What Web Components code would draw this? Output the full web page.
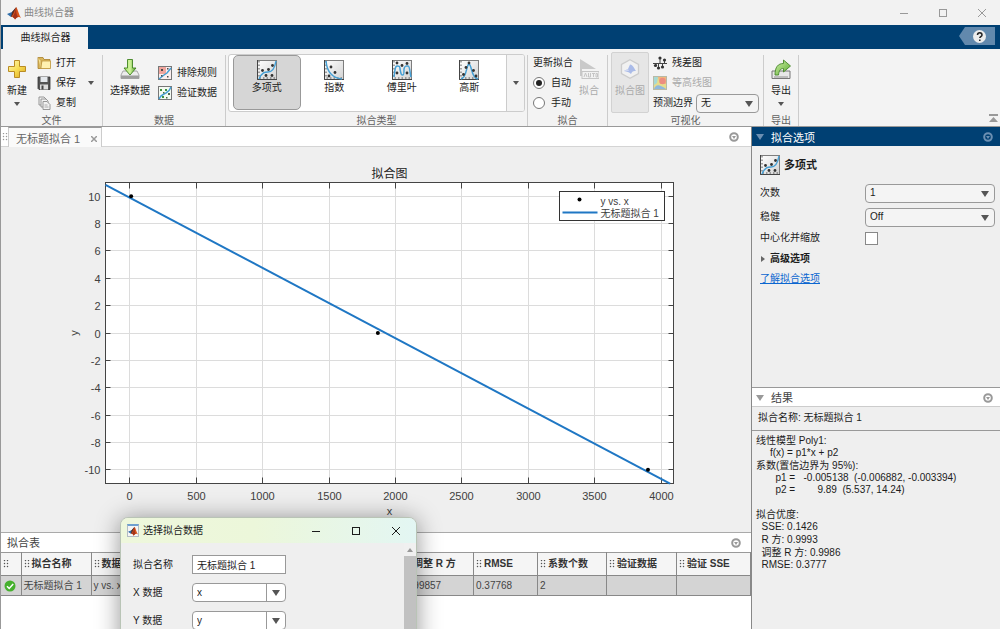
<!DOCTYPE html>
<html lang="zh-CN">
<head>
<meta charset="utf-8">
<title>曲线拟合器</title>
<style>
html,body{margin:0;height:100%;overflow:hidden;background:#efefef}
body{font:10px/14px "Liberation Sans","Noto Sans CJK SC",sans-serif;color:#1c1c1c}
</style>
</head>
<body>
<fit-app></fit-app>
<script>
const RESET = `*{box-sizing:border-box}
button,input,select{font:inherit;color:inherit;margin:0}
button{border:0;background:none;padding:0;display:block}
svg{display:block}`;
function define(name, css, html, init) {
  const t = document.createElement('template');
  t.innerHTML = `<style>${RESET}${css}</style>${html}`;
  customElements.define(name, class extends HTMLElement {
    constructor() {
      super();
      this.attachShadow({mode: 'open'}).append(t.content.cloneNode(true));
    }
    connectedCallback() { if (init) init(this, this.shadowRoot); }
  });
}

/* ---------- icons ---------- */
const frame = `<defs><linearGradient id="f" x2="1" y2="1"><stop offset="0" stop-color="#fff"/><stop offset="1" stop-color="#d2d2d2"/></linearGradient></defs>
<rect x=".5" y=".5" width="19" height="19" fill="url(#f)" stroke="#7d7d7d"/><path d="M2 1v17h17" fill="none" stroke="#555" stroke-width="1" stroke-dasharray="1.5 2"/><path d="M.5 0v19.500H20" fill="none" stroke="#444"/>`;
const dots = a => a.map(p => `<circle cx="${p[0]}" cy="${p[1]}" r="1.4" fill="#333"/>`).join('');
const curve = d => `<path d="${d}" fill="none" stroke="#46a0d5" stroke-width="1.5"/>`;
const ICONS = {
  poly: [20, frame + curve('M2 19C5 12 8 12 11 12C16 12 18 7 19 1') + dots([[5.5,10.5],[11.5,9.5],[15.5,5.5],[9,15.5],[15,15.5]])],
  exp: [20, frame + curve('M2 1C3 12 8 18 18 19') + dots([[7,7],[11,12.5],[5,16]])],
  fourier: [20, frame + curve('M2 17C3 10 3 6 5 6C7 6 8 6 8 9C9 14 9 15 11 15C12 15 12 12 12 9C13 5 14 6 16 6C18 6 18 14 19 17') + dots([[5,3],[10,5.5],[15,3.5],[5,13],[15,13]])],
  gauss: [20, frame + curve('M2 19C8 18 7 5 10 4C13 5 12 18 19 19') + dots([[10,3],[7,7.5],[14.5,10.5],[4.5,14.5],[17,16]])],
  matlab: [14, `<path d="M0 8L5 6L9 1.5L7 9L4 11z" fill="#2f6da8"/><path d="M5 6L9.300 1L7 10L4 11z" fill="#5c2c24"/><path d="M9.300 1C11 4 12 9 14 12C12 10.500 10.500 10.500 8 13.500C7.500 12 6 11 4.500 10.500C7 8 7.500 3.500 9.300 1z" fill="#d95319"/><path d="M9.300 1.500C9 6 9.500 9 11 11C9.500 11 9 12.500 8 13.500C7.500 12 6.500 11.500 5.500 11C8 8 8.200 4 9.300 1.500z" fill="#a2321b"/>`],
  plus: [20, `<defs><linearGradient id="p" x2="1" y2="1"><stop offset="0" stop-color="#fff9c0"/><stop offset=".5" stop-color="#f8de54"/><stop offset="1" stop-color="#dba51e"/></linearGradient></defs><path d="M7.500 1.500h5v6h6v5h-6v6h-5v-6h-6v-5h6z" fill="url(#p)" stroke="#b98c25" stroke-linejoin="round"/>`],
  open: [14, `<path d="M1 1.500h5l1 2h6v9H1z" fill="#d9b65c" stroke="#a9822c" stroke-width=".8"/><path d="M3.500 12.500L5 5h8.500v7.500z" fill="#fff2b0" stroke="#c09a42" stroke-width=".8"/><path d="M1 1.500l3 3v8" fill="#f6e294" stroke="#b18a33" stroke-width=".6"/>`],
  save: [14, `<path d="M1 1h12v12.500H2l-1-1z" fill="#555" stroke="#333" stroke-width=".8"/><rect x="3.500" y="1" width="7" height="5" fill="#e4e8ec"/><rect x="3" y="8.500" width="8" height="5" fill="#ddd"/><rect x="4.500" y="9.500" width="2" height="4" fill="#444"/>`],
  copy: [14, `<g fill="#f2f2f2" stroke="#8d8d8d" stroke-width=".9"><path d="M2 1h5l2 2v6H2z"/><path d="M4 3h5l2 2v6H4z"/><path d="M6 5.500h4l3 3v5H6z"/></g><path d="M7.500 9h3M7.500 11h4" stroke="#999" stroke-width=".8"/>`],
  import: [20, `<defs><linearGradient id="g"><stop offset="0" stop-color="#a7df64"/><stop offset=".5" stop-color="#d0f49c"/><stop offset="1" stop-color="#4f9e24"/></linearGradient></defs><path d="M3 12h14l2 4v3.500H1V16z" fill="#ececec" stroke="#969696" stroke-width=".8"/><path d="M1 16.500h18v3H1z" fill="#9d9d9d"/><path d="M7.500 .5h5v8.500h3.500l-6 7-6-7h3.500z" fill="url(#g)" stroke="#3f8220" stroke-width=".9"/>`],
  export: [20, `<defs><linearGradient id="x" x2="1" y2="1"><stop offset="0" stop-color="#d4f2ac"/><stop offset="1" stop-color="#56aa2b"/></linearGradient></defs><path d="M1 12h18v7.500H1z" fill="#e8e8e8" stroke="#777" stroke-width="1"/><path d="M3 17h14v2H3z" fill="#bdbdbd"/><path d="M4 16C4 8 7 4.500 12.500 4.500V1L19.500 7l-7 6V9.500C9 9.500 8 12 7.500 16z" fill="url(#x)" stroke="#47862a" stroke-width=".9"/>`],
  exclude: [14, `<rect x=".5" y=".5" width="13" height="13" fill="#fbeeee" stroke="#777"/><path d="M1 1h7v7H1z" fill="#f0a59d"/><path d="M1 13L6 9L9 7L13 2" fill="none" stroke="#46a0d5" stroke-width="1.500"/><path d="M3 3h2v2H3zM9 2h1.500v1.500H9zM3 9h1.500v1.500H3zM9 10h1.500v1.500H9z" fill="#4b4b4b"/>`],
  validate: [14, `<rect x=".5" y=".5" width="13" height="13" fill="#f4faf2" stroke="#777"/><path d="M1 13C3 8 5 9 8 7C10 6 12 4 13 1" fill="none" stroke="#46a0d5" stroke-width="1.500"/><path d="M2 3h2v2H2zM7 3h2v2H7zM4 10h2v2H4z" fill="#3f9140"/><path d="M10 7h2v2h-2zM8 11h1.500v1.500H8zM5 6h1.500v1.500H5z" fill="#4b6a4b"/>`],
  auto: [20, `<path d="M1 0L17 10H3v7H1z" fill="#c9c9c9"/><rect x="3" y="12.500" width="17" height="7" fill="#f1f1f1" stroke="#c5c5c5"/><path d="M5 18l1.500-4L8 18M9.500 14v4h2v-4M13 14.500h3M14.500 14v4M17 14.500h1.500V18H17z" fill="none" stroke="#c5c5c5"/>`],
  fitplot: [20, `<path d="M10 .800L18.500 5.500v9L10 19.200L1.500 14.500v-9z" fill="#f1f1f1" stroke="#ccc" stroke-width="1.300"/><path d="M4 12L8 10L10 5.500C13 6 14 9 16 12C13 11.500 12 12.500 11 15C9 13 7 12.500 4 12z" fill="#aabbe8"/><path d="M4 12L8 10L9 12z" fill="#cfd7f1"/>`],
  resid: [14, `<path d="M0 7.500h14M3 7v3M7 3v4M5.500 7v5M9.500 7v4M11.500 4v3" stroke="#444"/><g fill="#333"><circle cx="7" cy="2" r="1.600"/><circle cx="11.500" cy="4" r="1.600"/><circle cx="2.500" cy="9.500" r="1.600"/><circle cx="5.500" cy="12" r="1.600"/><circle cx="9.500" cy="11" r="1.600"/></g>`],
  contour: [14, `<rect x=".5" y=".5" width="13" height="13" fill="#e6dc8c" stroke="#b9b9a5"/><path d="M1 1h4L4 7L1 9z" fill="#a5d9d4"/><path d="M5 1h8v7H7z" fill="#f4b77a"/><circle cx="9.500" cy="5" r="3.200" fill="#ec8d80"/><path d="M1 13C3 8 6 8 13 13z" fill="#8fb8dc"/>`],
  check: [12, `<circle cx="6" cy="6" r="5.500" fill="#46b02e"/><path d="M3 6.200l2.200 2.300L9.200 4" fill="none" stroke="#fff" stroke-width="1.500"/>`],
  down: [8, `<path d="M1 2h6L4 6z" fill="#555"/>`],
  tri: [8, `<path d="M0 1h8L4 7z" fill="currentColor"/>`],
  right: [8, `<path d="M2 1v6l4-3z" fill="#666"/>`],
  menu: [12, `<circle cx="6" cy="6" r="3.800" fill="none" stroke="currentColor" stroke-width="2"/><path d="M4 5h4L6 8z" fill="currentColor"/>`],
  grip: [8, `<path d="M1 0h1v1H1zM4 0h1v1H4zM1 3h1v1H1zM4 3h1v1H4zM1 6h1v1H1zM4 6h1v1H4z" fill="currentColor" stroke="currentColor" stroke-width=".3"/>`],
  min: [10, `<path d="M1 5.500h8" stroke="currentColor" fill="none"/>`],
  max: [10, `<rect x="1.500" y="1.500" width="7" height="7" stroke="currentColor" fill="none"/>`],
  close: [10, `<path d="M1 1l8 8M9 1l-8 8" stroke="currentColor" fill="none"/>`]
};
define('ui-icon', `:host{display:block;flex:none}`, `<div></div>`, (el, root) => {
  const [n, body] = ICONS[el.getAttribute('name')];
  const s = el.getAttribute('size') || n;
  root.querySelector('div').innerHTML = `<svg width="${s}" height="${s}" viewBox="0 0 ${n} ${n}" aria-hidden="true">${body}</svg>`;
});

/* ---------- controls ---------- */
define('big-button', `:host{display:block}
button{display:flex;flex-direction:column;align-items:center;width:100%;white-space:nowrap}
ui-icon{margin-bottom:5px}.arrow{margin-top:2px}
:host([disabled]) button{color:#aaa}`,
`<button type="button"></button>`, (el, root) => {
  const b = root.querySelector('button');
  b.innerHTML = `<ui-icon name="${el.getAttribute('icon')}"></ui-icon><slot></slot>` + (el.hasAttribute('menu') ? '<ui-icon class="arrow" name="down"></ui-icon>' : '');
  b.disabled = el.hasAttribute('disabled');
});
define('row-button', `:host{display:block}
button{display:flex;align-items:center;gap:5px;height:20px;width:100%;white-space:nowrap}
:host([disabled]) button{color:#aaa}ui-icon:nth-of-type(2){margin-left:auto}`,
`<button type="button"></button>`, (el, root) => {
  const b = root.querySelector('button');
  b.innerHTML = `<ui-icon name="${el.getAttribute('icon')}"></ui-icon><slot></slot>` + (el.hasAttribute('menu') ? '<ui-icon name="down"></ui-icon>' : '');
  b.disabled = el.hasAttribute('disabled');
});
define('tool-section', `:host{display:flex;flex-direction:column;flex:none;border-right:1px solid #ccc;height:71px}
.c{height:58px;display:flex}.l{height:13px;line-height:15px;text-align:center;color:#606060}`,
`<div class="c"><slot></slot></div><div class="l"></div>`, (el, root) => { root.querySelector('.l').textContent = el.getAttribute('label'); });
define('drop-down', `:host{display:block;position:relative;height:19px}
select{appearance:none;width:100%;height:100%;border:1px solid #999;border-radius:4px;background:#f4f4f4;padding:0 20px 0 4px;display:block;outline:0}
ui-icon{position:absolute;right:6px;top:6px;color:#555;pointer-events:none}
:host([split]) select{background:#fff}
:host([split]) i{position:absolute;right:19px;top:0;bottom:0;width:1px;background:#999}`,
`<select><option></option></select><i></i><ui-icon name="tri"></ui-icon>`, (el, root) => {
  root.querySelector('option').textContent = el.getAttribute('value');
  root.querySelector('select').setAttribute('aria-label', el.getAttribute('label'));
});

/* ---------- title bar and ribbon ---------- */
define('title-bar', `:host{display:flex;align-items:center;height:25px;background:#f2f2f2;color:#888;padding:0 13px 0 6px;gap:3px}
.b{display:flex;gap:29px;margin-left:auto;color:#999}`,
`<ui-icon name="matlab"></ui-icon><span>曲线拟合器</span><div class="b"><button aria-label="最小化"><ui-icon name="min"></ui-icon></button><button aria-label="最大化"><ui-icon name="max"></ui-icon></button><button aria-label="关闭"><ui-icon name="close"></ui-icon></button></div>`);
define('ribbon-tabs', `:host{display:flex;justify-content:space-between;height:24px;background:#004073;padding:2px 5px 0 2px}
.t{background:#f3f3f3;width:85px;text-align:center;height:22px;line-height:20px}
.h{width:36px;height:18px}`,
`<button class="t">曲线拟合器</button><button class="h" aria-label="帮助"><svg width="36" height="18"><path d="M0 9L6 0h30v18H6z" fill="#6289ad"/><circle cx="20.500" cy="9.500" r="6.500" fill="#ececec"/><path d="M18.500 8c0-3 4.500-3 4.500 0c0 1.500-2.200 1.800-2.200 3M20.800 12.500v1.500" fill="none" stroke="#222" stroke-width="1.500"/></svg></button>`);
define('fit-gallery', `:host{display:flex;height:58px;border:1px solid #ccc;border-radius:3px;background:#fff;overflow:hidden}
.g{flex:1;display:grid;grid-template-columns:repeat(4,1fr);padding:0 3px 0 4px}
.g button{display:flex;flex-direction:column;align-items:center;gap:1px;height:55px;padding-top:4px;border:1px solid transparent;border-radius:5px;line-height:14px}
.g .on{background:#d6d6d6;border-color:#999}
.m{width:18px;background:#f3f3f3;border-left:1px solid #ccc;padding-left:5px}`,
`<div class="g"><button class="on"><ui-icon name="poly"></ui-icon>多项式</button><button><ui-icon name="exp"></ui-icon>指数</button><button><ui-icon name="fourier"></ui-icon>傅里叶</button><button><ui-icon name="gauss"></ui-icon>高斯</button></div><button class="m" aria-label="更多"><ui-icon name="down"></ui-icon></button>`);
define('tool-strip', `:host{display:flex;height:78px;background:#f3f3f3;border-bottom:1px solid #999;padding:6px 0 0 0}
.file{width:102px}.data{width:123px}.type{width:302px}.fit{width:80px}.vis{width:156px}.exp{width:35px}
.rows{margin-top:-2px}
big-button{padding-top:4px}
.file big-button{width:32px}.file .rows{margin-left:4px;width:58px}
.data big-button{width:54px}.data .rows{margin:8px 0 0 1px}
fit-gallery{flex:1;margin:-1px 2px 0 2px}
.fit .rows{padding-left:5px;width:48px}.fit label{display:flex;align-items:center;height:20px;gap:6px}.fit .cap{height:20px;line-height:20px;white-space:nowrap}
input[type=radio]{appearance:none;width:12px;height:12px;border:1px solid #777;border-radius:50%;background:#fff;display:grid;place-content:center}
input:checked::before{content:"";width:6px;height:6px;border-radius:50%;background:#222}
.fit big-button{width:26px}
.vis big-button{width:38px;height:61px;margin:-3px 4px 0 3px;background:#e6e6e6;border:1px solid #d2d2d2;border-radius:2px;padding-top:6px}
.bound{display:flex;align-items:center;gap:3px;height:20px}.bound drop-down{width:63px}
.exp big-button{width:35px}
.up{margin:auto 2px 3px auto}`,
`<tool-section class="file" label="文件"><big-button icon="plus" menu>新建</big-button><div class="rows"><row-button icon="open">打开</row-button><row-button icon="save" menu>保存</row-button><row-button icon="copy">复制</row-button></div></tool-section>
<tool-section class="data" label="数据"><big-button icon="import">选择数据</big-button><div class="rows"><row-button icon="exclude">排除规则</row-button><row-button icon="validate">验证数据</row-button></div></tool-section>
<tool-section class="type" label="拟合类型"><fit-gallery></fit-gallery></tool-section>
<tool-section class="fit" label="拟合"><div class="rows"><div class="cap">更新拟合</div><label><input type="radio" name="u" checked>自动</label><label><input type="radio" name="u">手动</label></div><big-button icon="auto" disabled>拟合</big-button></tool-section>
<tool-section class="vis" label="可视化"><big-button icon="fitplot" disabled>拟合图</big-button><div class="rows"><row-button icon="resid">残差图</row-button><row-button icon="contour" disabled>等高线图</row-button><div class="bound"><span>预测边界</span><drop-down value="无" label="预测边界"></drop-down></div></div></tool-section>
<tool-section class="exp" label="导出"><big-button icon="export" menu>导出</big-button></tool-section>
<button class="up" aria-label="折叠"><svg width="9" height="9"><path d="M0 0h9v2H0zM4.500 3L9 8H0z" fill="#999"/></svg></button>`);

/* ---------- chart ---------- */
define('fit-chart', `:host{display:block;flex:1;min-height:0;position:relative;overflow:hidden}
svg{position:absolute;inset:0;width:100%;height:100%}
text{font-size:11px;fill:#404040}`,
`<svg role="img" aria-label="拟合图"></svg>`, (el, root) => {
  const svg = root.querySelector('svg');
  const draw = () => {
    const W = el.clientWidth, H = el.clientHeight;
    const L = 104.5, R = W - 77.5, T = 35.5, B = H - 48.5;
    const x = v => L + (v + 183) * (R - L) / 4275;
    const y = v => T + (11 - v) * (B - T) / 22;
    let s = `<rect x="${L}" y="${T}" width="${R-L}" height="${B-T}" fill="#fff"/>`, grid = '', tick = '', txt = '';
    for (let v = 0; v <= 4000; v += 500) {
      const p = Math.floor(x(v)) + .5;
      grid += `M${p} ${T}V${B}`; tick += `M${p} ${T}v6M${p} ${B}v-6`;
      txt += `<text x="${p}" y="${B+16}" text-anchor="middle">${v}</text>`;
    }
    for (let v = -10; v <= 10; v += 2) {
      const p = Math.floor(y(v)) + .5;
      grid += `M${L} ${p}H${R}`; tick += `M${L} ${p}h5M${R} ${p}h-5`;
      txt += `<text x="${L-5}" y="${p+4}" text-anchor="end">${v}</text>`;
    }
    const m = (L + R) / 2, f = v => 9.89 - .005138 * v;
    const pts = [[10,10],[1867,0],[3900,-10]].map(p => `<circle cx="${x(p[0])}" cy="${y(p[1])}" r="2"/>`).join('');
    const gx = R - 114, gy = T + 9;
    s += `<path d="${grid}" stroke="#dcdcdc"/><path d="${tick}" stroke="#444"/><rect x="${L}" y="${T}" width="${R-L}" height="${B-T}" fill="none" stroke="#444"/>
<path d="M${x(-183)} ${y(f(-183))}L${x(4066)} ${y(f(4066))}" stroke="#1f77c4" stroke-width="2"/>${pts}${txt}
<text x="${m}" y="${T-5}" text-anchor="middle" style="font-size:12px;fill:#222">拟合图</text>
<text x="${m}" y="${B+31}" text-anchor="middle">x</text>
<text transform="translate(${L-28} ${(T+B)/2}) rotate(-90)" text-anchor="middle">y</text>
<rect x="${gx}" y="${gy}" width="105" height="29" fill="#fff" stroke="#333"/><circle cx="${gx+20}" cy="${gy+8}" r="2"/>
<path d="M${gx+3} ${gy+21}h35" stroke="#1f77c4" stroke-width="2"/>
<text x="${gx+41}" y="${gy+13}" style="font-size:10px">y vs. x</text><text x="${gx+41}" y="${gy+25}" style="font-size:10px">无标题拟合 1</text>`;
    svg.innerHTML = s;
  };
  draw();
  new ResizeObserver(draw).observe(el);
});

/* ---------- document area ---------- */
define('doc-tabs', `:host{display:flex;align-items:center;height:20px;flex:none;background:#fff;border-bottom:1px solid #d4d4d4;color:#666;font-size:11px;padding-right:11px}
.g{padding:0 1px;width:7px;color:#999}.t{display:flex;align-items:center;gap:11px;height:20px;padding:4px 4px 0 7px;border:1px solid #ccc;border-top-color:#999;border-bottom:0;background:#fafafa}
.m{margin-left:auto;color:#999}`,
`<div class="g"><ui-icon name="grip"></ui-icon></div><button class="t"><span>无标题拟合 1</span><svg width="6" height="6"><path d="M0 0l6 6M6 0l-6 6" stroke="#999" stroke-width="1.500"/></svg></button><button class="m" aria-label="菜单"><ui-icon name="menu"></ui-icon></button>`);
define('fit-table', `:host{display:block;height:97px;flex:none;background:#fff;border-top:1px solid #aaa}
.h{display:flex;align-items:center;justify-content:space-between;height:19px;padding:1px 9px 0 6px;font-size:11px;color:#444}
.m{color:#999}
table{border-collapse:collapse;table-layout:fixed;width:100%;border-bottom:1px solid #888}
th,td{padding:0 0 0 2px;text-align:left;white-space:nowrap;overflow:hidden;border-right:1px solid #888}
th{height:23px;background:#f5f5f5;border-top:1px solid #999;border-bottom:1px solid #888;color:#333}
td{height:20px;background:#d4d4d4;color:#444}
th div{display:flex;align-items:center}
th ui-icon{color:#555}
td:first-child{padding-left:3px}`,
`<div class="h"><span>拟合表</span><button class="m" aria-label="菜单"><ui-icon name="menu"></ui-icon></button></div>
<table><colgroup><col style="width:20px"><col style="width:70px"><col><col style="width:71px"><col style="width:64px"><col style="width:69px"><col style="width:70px"><col style="width:74px"></colgroup>
<thead><tr></tr></thead><tbody><tr><td><ui-icon name="check"></ui-icon></td><td>无标题拟合 1</td><td>y vs. x</td><td>0.99857</td><td>0.37768</td><td>2</td><td></td><td></td></tr></tbody></table>`, (el, root) => {
  root.querySelector('thead tr').innerHTML = ['', '拟合名称', '数据', '调整 R 方', 'RMSE', '系数个数', '验证数据', '验证 SSE'].map(t => `<th><div><ui-icon name="grip"></ui-icon><span>${t}</span></div></th>`).join('');
});

/* ---------- right column ---------- */
define('panel-head', `:host{display:flex;align-items:center;gap:7px;height:19px;padding:1px 6px 0 4px;font-size:11px;background:#fff;color:#999}
:host([active]){background:#004073;color:#6b8fb2}
.t{color:#444;margin-right:auto;padding-top:1px}:host([active]) .t{color:#fff}
button{color:inherit}`,
`<ui-icon name="tri"></ui-icon><span class="t"><slot></slot></span><button aria-label="菜单"><ui-icon name="menu"></ui-icon></button>`);
define('fit-options', `:host{display:block;height:260px;flex:none}
.n{display:flex;align-items:center;gap:4px;font-size:11px;padding:9px 0 6px 8px;margin:0}
.r{display:grid;grid-template-columns:105px 1fr;align-items:center;padding:0 5px 0 8px;height:24px}
.k{height:18px}
input{appearance:none;width:13px;height:13px;border:1px solid #888;background:#fff}
.adv{display:flex;align-items:center;gap:3px;font-weight:bold;padding:5px 0 3px 7px;height:22px}
a{display:inline-block;color:#0b66d0;margin:3px 0 0 8px}`,
`<panel-head active>拟合选项</panel-head><h2 class="n"><ui-icon name="poly"></ui-icon>多项式</h2>
<div class="r"><span>次数</span><drop-down value="1" label="次数"></drop-down></div>
<div class="r"><span>稳健</span><drop-down value="Off" label="稳健"></drop-down></div>
<div class="r k"><label for="c">中心化并缩放</label><input id="c" type="checkbox"></div>
<button class="adv"><ui-icon name="right"></ui-icon>高级选项</button><a href="#">了解拟合选项</a>`);
define('fit-results', `:host{display:flex;flex-direction:column;flex:1;border-top:1px solid #999}
panel-head{border-bottom:1px solid #ccc}
.n{height:24px;line-height:22px;padding-left:6px;border-bottom:1px solid #999;flex:none}
.o{padding:3px 0 0 4px;white-space:pre}
.o div{height:12px;line-height:12px}.o .z{height:13px;line-height:13px}`,
`<panel-head>结果</panel-head><div class="n">拟合名称: 无标题拟合 1</div>
<div class="o"><div class="z">线性模型 Poly1:</div><div>     f(x) = p1*x + p2</div><div class="z">系数(置信边界为 95%):</div><div>       p1 =   -0.005138  (-0.006882, -0.003394)</div><div>       p2 =        9.89  (5.537, 14.24)</div><div></div><div class="z">拟合优度:</div><div>  SSE: 0.1426</div><div class="z">  R 方: 0.9993</div><div class="z">  调整 R 方: 0.9986</div><div>  RMSE: 0.3777</div></div>`);

/* ---------- floating dialog ---------- */
define('data-dialog', `:host{display:flex;flex-direction:column;background:#efefef;border:1px solid #b9c4b6;border-radius:8px;box-shadow:0 2px 24px rgba(0,0,0,.42);overflow:hidden}
.t{display:flex;align-items:center;gap:4px;height:25px;flex:none;padding:0 15px 0 6px;background:linear-gradient(90deg,#eef7dc,#ecf7da 45%,#e3f6f3)}
.i{border:1px solid #b3bcc5;border-top:2px solid #6fa0cf;background:#f5f5f5}
.b{display:flex;gap:30px;margin-left:auto}
.c{flex:1;display:flex;justify-content:space-between}
.f{display:grid;grid-template-columns:59px 94px;grid-auto-rows:19px;row-gap:9px;padding:12px 0 0 12px;align-items:center}
input{width:94px;height:19px;border:1px solid #999;background:#fff;padding:0 4px}
.s{width:12px;background:#f0f0f0;padding-top:5px;display:flex;flex-direction:column;gap:4px;align-items:center}
.s i{flex:1;width:12px;background:#c1c1c1}`,
`<div class="t"><div class="i"><ui-icon name="matlab" size="10"></ui-icon></div><span>选择拟合数据</span><div class="b"><button aria-label="最小化"><ui-icon name="min"></ui-icon></button><button aria-label="最大化"><ui-icon name="max"></ui-icon></button><button aria-label="关闭"><ui-icon name="close"></ui-icon></button></div></div>
<div class="c"><div class="f"><label for="n">拟合名称</label><input id="n" value="无标题拟合 1"><span>X 数据</span><drop-down split value="x" label="X 数据"></drop-down><span>Y 数据</span><drop-down split value="y" label="Y 数据"></drop-down></div>
<div class="s"><svg width="6" height="4"><path d="M3 0L6 4H0z" fill="#999"/></svg><i></i></div></div>`);

define('fit-app', `:host{display:flex;flex-direction:column;height:100vh;border-left:1px solid #999;position:relative;overflow:hidden}
main{flex:1;display:grid;grid-template-columns:minmax(0,1fr) 249px;min-height:0}
.l{display:flex;flex-direction:column;min-height:0;min-width:0}
.r{display:flex;flex-direction:column;border-left:1px solid #888}
data-dialog{position:absolute;left:119px;top:517px;width:297px;height:150px}`,
`<title-bar></title-bar><ribbon-tabs></ribbon-tabs><tool-strip></tool-strip>
<main><div class="l"><doc-tabs></doc-tabs><fit-chart></fit-chart><fit-table></fit-table></div><div class="r"><fit-options></fit-options><fit-results></fit-results></div></main>
<data-dialog></data-dialog>`);
</script>
</body>
</html>
